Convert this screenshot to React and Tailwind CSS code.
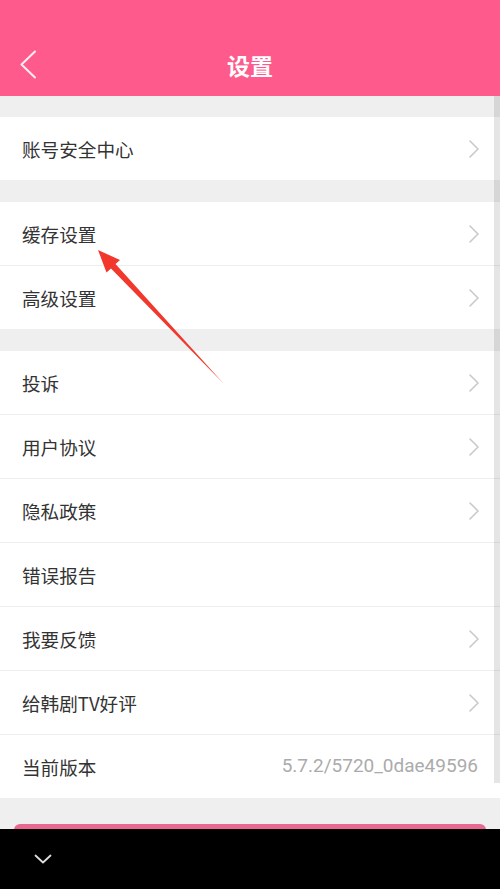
import React from 'react';

const groups = [
    [{ label: '账号安全中心' }],
    [{ label: '缓存设置' }, { label: '高级设置' }],
    [
        { label: '投诉' },
        { label: '用户协议' },
        { label: '隐私政策' },
        { label: '错误报告', noArrow: true },
        { label: '我要反馈' },
        { label: '给韩剧TV好评' },
        { label: '当前版本', value: '5.7.2/5720_0dae49596', noArrow: true },
    ],
];

const Chevron = () => (
    <svg width="12" height="20" viewBox="0 0 12 20" fill="none">
        <polyline points="2,2 10,10 2,18" stroke="#c9c9c9" strokeWidth="1.6" strokeLinecap="round" strokeLinejoin="round" />
    </svg>
);

const Row = ({ item }) => (
    <div className="h-[63px] flex items-center justify-between pl-[22px] pr-[20px] bg-white">
        <span className="text-[18.6px] text-[#333333]">{item.label}</span>
        {item.value && (
            <span className="text-[19px] text-[#ababab] font-['Roboto',sans-serif] pr-[2px]">{item.value}</span>
        )}
        {!item.noArrow && <Chevron />}
    </div>
);

const App = () => {
    return (
        <div className="relative w-[500px] h-[889px] flex flex-col overflow-hidden font-['Noto_Sans_CJK_SC','Noto_Sans',sans-serif] bg-[#efeff0]">
            {/* header */}
            <div className="h-[96px] shrink-0 bg-[#ff5a8c] flex items-end pb-[14px] relative">
                <div className="w-full flex items-center justify-center h-[34px]">
                    <span className="text-white text-[23px] font-bold">设置</span>
                </div>
                <svg className="absolute left-[18px] top-[50px]" width="20" height="30" viewBox="0 0 20 30" fill="none">
                    <polyline points="17,1.5 3.5,14.5 17,27.5" stroke="#ffffff" strokeOpacity="0.9" strokeWidth="2" strokeLinecap="round" strokeLinejoin="round" />
                </svg>
            </div>

            {/* list */}
            <div className="flex-1 overflow-hidden pt-[21px]">
                {groups.map((g, gi) => (
                    <div key={gi} className={gi > 0 ? 'mt-[22px]' : ''}>
                        {g.map((item, i) => (
                            <div key={item.label}>
                                {i > 0 && <div className="h-px bg-[#eeeeee]" />}
                                <Row item={item} />
                            </div>
                        ))}
                    </div>
                ))}
                <div className="mt-[26px] mx-[14px] h-[48px] rounded-md bg-[#e8688f]" />
            </div>

            {/* bottom system bar */}
            <div className="h-[60px] shrink-0 bg-black flex items-center pl-[34px]">
                <svg width="18" height="10" viewBox="0 0 18 10" fill="none">
                    <polyline points="1.5,1.5 9,8.5 16.5,1.5" stroke="#dddddd" strokeWidth="1.8" strokeLinecap="round" strokeLinejoin="round" />
                </svg>
            </div>

            {/* scrollbar track */}
            <div className="absolute right-0 top-[96px] w-[6px] h-[687px] bg-black/10" />

            {/* red annotation arrow */}
            <svg className="absolute left-0 top-0 pointer-events-none" width="500" height="889" viewBox="0 0 500 889">
                <polygon points="98,250 120,260 115.5,264 224,384 111,268.5 106.5,272.5" fill="#f2382c" />
            </svg>
        </div>
    );
};

export default App;
